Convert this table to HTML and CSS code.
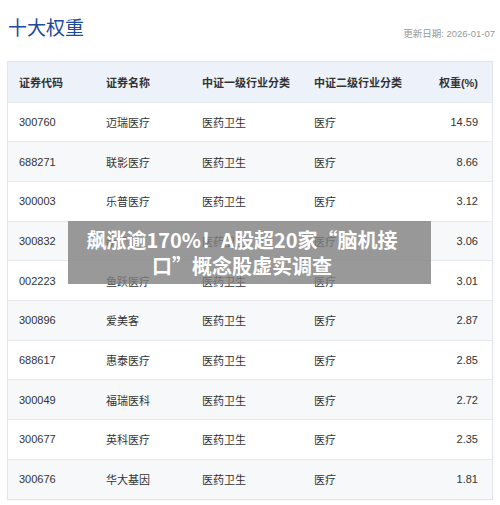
FILE: index.html
```html
<!DOCTYPE html>
<html lang="zh">
<head>
<meta charset="utf-8">
<link rel="stylesheet" href="styles.css">
</head>
<body>
<div class="page">
  <div class="head">
    <h1 class="title">十大权重</h1>
    <div class="date">更新日期: 2026-01-07</div>
  </div>
  <div class="table-wrap">
    <table class="tbl">
      <thead>
        <tr><th class="c1">证券代码</th><th class="c2">证券名称</th><th class="c3">中证一级行业分类</th><th class="c4">中证二级行业分类</th><th class="c5">权重(%)</th></tr>
      </thead>
      <tbody>
        <tr><td>300760</td><td>迈瑞医疗</td><td>医药卫生</td><td>医疗</td><td class="num">14.59</td></tr>
        <tr><td>688271</td><td>联影医疗</td><td>医药卫生</td><td>医疗</td><td class="num">8.66</td></tr>
        <tr><td>300003</td><td>乐普医疗</td><td>医药卫生</td><td>医疗</td><td class="num">3.12</td></tr>
        <tr><td>300832</td><td>新产业</td><td>医药卫生</td><td>医疗</td><td class="num">3.06</td></tr>
        <tr><td>002223</td><td>鱼跃医疗</td><td>医药卫生</td><td>医疗</td><td class="num">3.01</td></tr>
        <tr><td>300896</td><td>爱美客</td><td>医药卫生</td><td>医疗</td><td class="num">2.87</td></tr>
        <tr><td>688617</td><td>惠泰医疗</td><td>医药卫生</td><td>医疗</td><td class="num">2.85</td></tr>
        <tr><td>300049</td><td>福瑞医科</td><td>医药卫生</td><td>医疗</td><td class="num">2.72</td></tr>
        <tr><td>300677</td><td>英科医疗</td><td>医药卫生</td><td>医疗</td><td class="num">2.35</td></tr>
        <tr><td>300676</td><td>华大基因</td><td>医药卫生</td><td>医疗</td><td class="num">1.81</td></tr>
      </tbody>
    </table>
  </div>
  <div class="overlay">
    <div class="ov-text">飙涨逾170%！A股超20家“脑机接口”概念股虚实调查</div>
  </div>
</div>
</body>
</html>
```
FILE: styles.css
```css
* { box-sizing: border-box; }
html, body { margin: 0; padding: 0; background: #fff; }
body {
  font-family: "Liberation Sans", "Noto Sans CJK SC", sans-serif;
  color: #333;
}
.page { position: relative; width: 500px; height: 505px; padding: 14px 7px 0 7px; }
.head { display: flex; justify-content: space-between; align-items: flex-end; height: 26px; }
.title {
  margin: 0;
  font-family: "Noto Sans CJK SC", sans-serif;
  font-weight: 400;
  font-size: 19px;
  line-height: 26px;
  color: #1d4a9a;
  padding-left: 1px;
}
.date {
  font-size: 9.5px;
  color: #999;
  line-height: 12px;
  margin-right: -2px;
}
.table-wrap {
  margin-top: 21px;
  width: 486px;
  border: 1px solid #e3e6ec;
  box-shadow: 0 0 2px rgba(0,0,0,0.06);
}
.tbl { width: 100%; border-collapse: collapse; table-layout: fixed; font-size: 11px; }
.tbl th, .tbl td { text-align: left; padding: 0; white-space: nowrap; }
.tbl thead tr { height: 40px; background: #edf2fa; }
.tbl th { font-weight: 700; color: #333; }
.tbl tbody tr { height: 39.7px; border-top: 1px solid #e8e9ec; }
.tbl tbody tr:nth-child(even) { background: #f7f8fa; }
.c1 { width: 98px; padding-left: 11px !important; }
.c2 { width: 96px; }
.c3 { width: 112px; }
.c4 { width: 110px; }
.tbl td:first-child { padding-left: 11px; }
.tbl td { color: #333; }
.c5, .num { text-align: right !important; padding-right: 14px !important; }
.overlay {
  position: absolute;
  left: 68px;
  top: 221px;
  width: 363px;
  height: 63px;
  background: rgba(128,128,128,0.8);
  display: flex;
  align-items: center;
  padding: 0 0 0 9px;
}
.ov-text {
  width: 330px;
  color: #fff;
  font-family: "Noto Sans CJK SC", sans-serif;
  font-weight: 700;
  font-size: 20px;
  line-height: 26px;
  text-align: center;
}
```
